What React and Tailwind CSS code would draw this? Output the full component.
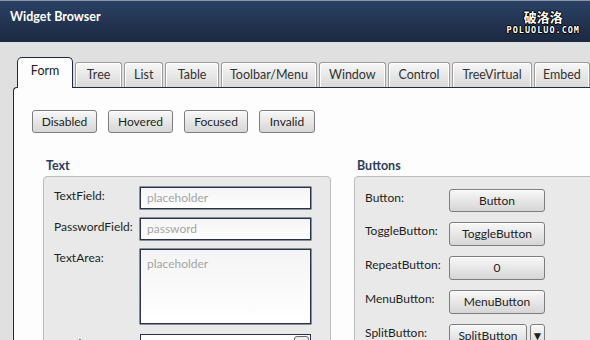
import React from "react";

const font = { fontFamily: 'Lato, "Noto Sans", sans-serif' };

function Tab({ label, w, active }) {
  if (active) {
    return (
      <div
        className={`relative z-10 h-[31px] ${w} flex items-center justify-center rounded-t-[5px] border border-b-0 border-[#1c2a44] bg-[#fdfdfd] text-[12.5px] text-[#222] pb-[3px]`}
      >
        {label}
      </div>
    );
  }
  return (
    <div
      className={`h-[25px] ${w} mb-px ml-[2px] flex items-center justify-center rounded-t-[3px] border border-b-0 border-[#9c9c9c] bg-gradient-to-b from-[#f7f7f7] to-[#d9d9d9] text-[12.5px] text-[#333] shadow-[inset_1px_1px_0_#ffffff,inset_-1px_0_0_#ffffff] overflow-hidden whitespace-nowrap`}
    >
      {label}
    </div>
  );
}

function Btn({ children, className = "" }) {
  return (
    <div
      className={`flex items-center justify-center rounded-[3px] border border-[#7d7d7d] bg-gradient-to-b from-[#f8f8f8] to-[#d6d6d6] text-[12px] text-[#1e1e1e] shadow-[inset_0_1px_0_#ffffff] whitespace-nowrap ${className}`}
    >
      {children}
    </div>
  );
}

function Input({ ph, className = "h-[22px] items-center" }) {
  return (
    <div
      className={`w-[171px] border border-[#27344a] bg-gradient-to-b from-[#f4f4f4] to-[#ffffff] pl-[6px] text-[12px] text-[#a5a5a5] shadow-[0_0_0_0.5px_#27344a] flex ${className}`}
    >
      {ph}
    </div>
  );
}

export default function App() {
  return (
    <div className="w-[590px] h-[340px] overflow-hidden bg-[#e0e0e0]" style={font}>
      {/* header */}
      <div className="h-[42px] border-t border-[#8a95a5] bg-gradient-to-b from-[#2b4165] to-[#1b2940] flex items-start justify-between">
        <div className="pl-[10px] pt-[7px] text-[12.5px] font-bold text-white">Widget Browser</div>
        <div className="pr-[10px] pt-[9px] flex flex-col items-center leading-none">
          <div
            className="text-[13px] font-bold text-white"
            style={{ fontFamily: '"Noto Sans CJK SC", sans-serif', textShadow: "1px 0 0 #000, -1px 0 0 #000, 0 1px 0 #000, 0 -1px 0 #000" }}
          >
            破洛洛
          </div>
          <div
            className="mt-[3px] text-[8.5px] font-bold text-white tracking-[1px]"
            style={{ fontFamily: '"DejaVu Sans Mono", monospace', textShadow: "1px 0 0 #000, -1px 0 0 #000, 0 1px 0 #000, 0 -1px 0 #000" }}
          >
            POLUOLUO.COM
          </div>
        </div>
      </div>

      <div className="pl-[13px] pt-[15px]">
        {/* tabs */}
        <div className="flex items-end pl-[4px] h-[31px] whitespace-nowrap">
          <Tab label="Form" w="w-[60px]" active />
          <Tab label="Tree" w="w-[50px]" />
          <Tab label="List" w="w-[42px]" />
          <Tab label="Table" w="w-[57px]" />
          <Tab label="Toolbar/Menu" w="w-[103px]" />
          <Tab label="Window" w="w-[71px]" />
          <Tab label="Control" w="w-[67px]" />
          <Tab label="TreeVirtual" w="w-[85px]" />
          <Tab label="Embed" w="w-[60px]" />
        </div>

        {/* pane */}
        <div className="-mt-px h-[300px] border-l border-t border-[#1c2a44] rounded-tl-[4px] bg-[#fdfdfd] pl-[18px] pt-[22px]">
          <div className="flex gap-[11px]">
            <Btn className="w-[65px] h-[23px]">Disabled</Btn>
            <Btn className="w-[65px] h-[23px]">Hovered</Btn>
            <Btn className="w-[64px] h-[23px]">Focused</Btn>
            <Btn className="w-[56px] h-[23px]">Invalid</Btn>
          </div>

          <div className="mt-[25px] flex gap-[23px] pl-[11px]">
            {/* Text column */}
            <div className="w-[288px] shrink-0">
              <div className="pl-[3px] h-[18px] text-[12.5px] font-bold text-[#2b3d5c] leading-[16px]">Text</div>
              <div className="h-[200px] rounded-[4px] border border-[#bdbdbd] bg-[#e9e9e9] pl-[10px] pt-[10px] text-[12px] text-[#1e1e1e]">
                <div className="flex">
                  <div className="w-[86px]">TextField:</div>
                  <Input ph="placeholder" />
                </div>
                <div className="flex mt-[9px]">
                  <div className="w-[86px]">PasswordField:</div>
                  <Input ph="password" />
                </div>
                <div className="flex mt-[9px]">
                  <div className="w-[86px]">TextArea:</div>
                  <Input ph="placeholder" className="h-[75px] pt-[5px] items-start" />
                </div>
                <div className="flex mt-[10px]">
                  <div className="w-[86px] pt-[1px]">ComboBox:</div>
                  <div className="relative w-[171px] h-[22px] border border-[#27344a] bg-white">
                    <div className="absolute right-[1px] top-[1px] w-[15px] h-[18px] rounded-[3px] border border-[#666] bg-[#eee]" />
                  </div>
                </div>
              </div>
            </div>

            {/* Buttons column */}
            <div className="w-[260px] shrink-0">
              <div className="pl-[3px] h-[18px] text-[12.5px] font-bold text-[#2b3d5c] leading-[16px]">Buttons</div>
              <div className="h-[200px] rounded-[4px] border border-[#bdbdbd] bg-[#e9e9e9] pl-[10px] pt-[12px] text-[12px] text-[#1e1e1e]">
                <div className="flex">
                  <div className="w-[84px]">Button:</div>
                  <Btn className="w-[96px] h-[23px]">Button</Btn>
                </div>
                <div className="flex mt-[10px]">
                  <div className="w-[84px]">ToggleButton:</div>
                  <Btn className="w-[96px] h-[24px]">ToggleButton</Btn>
                </div>
                <div className="flex mt-[10px]">
                  <div className="w-[84px]">RepeatButton:</div>
                  <Btn className="w-[96px] h-[24px]">0</Btn>
                </div>
                <div className="flex mt-[10px]">
                  <div className="w-[84px]">MenuButton:</div>
                  <Btn className="w-[96px] h-[24px]">MenuButton</Btn>
                </div>
                <div className="flex mt-[10px]">
                  <div className="w-[84px]">SplitButton:</div>
                  <Btn className="w-[78px] h-[24px]">SplitButton</Btn>
                  <Btn className="ml-[3px] w-[15px] h-[24px] text-[8px]">▼</Btn>
                </div>
              </div>
            </div>
          </div>
        </div>
      </div>
    </div>
  );
}
